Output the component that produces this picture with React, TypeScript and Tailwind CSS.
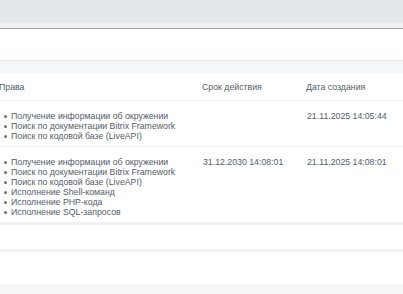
import React from "react";

const Bullets = ({ items }: { items: string[] }) => (
  <div className="flex flex-col">
    {items.map((t) => (
      <div key={t} className="flex items-center h-[10px]">
        <span className="ml-[4px] mr-[4px] w-[3px] h-[3px] rounded-full bg-[#6b727c] inline-block shrink-0" />
        <span>{t}</span>
      </div>
    ))}
  </div>
);

export default function App() {
  return (
    <div
      className="w-[403px] h-[294px] overflow-hidden bg-white text-[8.75px] leading-[10px] text-[#535c69] flex flex-col"
      style={{ fontFamily: '"Liberation Sans", Arial, sans-serif' }}
    >
      <div className="h-[23px] bg-[#e4e8eb] shrink-0" />
      <div className="h-[5px] bg-[#eef0f2] shrink-0" />
      <div className="h-[1px] bg-[#a4a8ac] shrink-0" />
      <div className="h-[31px] bg-white shrink-0" />
      <div className="h-[13px] bg-[#f5f6f7] border-t border-[#e3e6e8] shrink-0" />
      <div className="grid grid-cols-[202px_104px_1fr] pt-[9px] pb-[8px] shrink-0">
        <div className="-ml-[1px]">Права</div>
        <div>Срок действия</div>
        <div>Дата создания</div>
      </div>
      <div className="grid grid-cols-[202px_104px_1fr] border-t border-[#f0f1f2] pt-[10px] pb-[5px] shrink-0">
        <Bullets
          items={[
            "Получение информации об окружении",
            "Поиск по документации Bitrix Framework",
            "Поиск по кодовой базе (LiveAPI)",
          ]}
        />
        <div />
        <div className="h-[10px] pl-[1px]">21.11.2025 14:05:44</div>
      </div>
      <div className="grid grid-cols-[202px_104px_1fr] border-t border-[#f0f1f2] pt-[10px] pb-[5px] shrink-0">
        <Bullets
          items={[
            "Получение информации об окружении",
            "Поиск по документации Bitrix Framework",
            "Поиск по кодовой базе (LiveAPI)",
            "Исполнение Shell-команд",
            "Исполнение PHP-кода",
            "Исполнение SQL-запросов",
          ]}
        />
        <div className="h-[10px] pl-[1px]">31.12.2030 14:08:01</div>
        <div className="h-[10px] pl-[1px]">21.11.2025 14:08:01</div>
      </div>
      <div className="h-[3px] bg-[#f0f1f3] shrink-0" />
      <div className="h-[24px] bg-white shrink-0" />
      <div className="h-[3px] bg-[#f0f1f3] shrink-0" />
      <div className="h-[32px] bg-white shrink-0" />
      <div className="flex-1 bg-[#f5f6f7]" />
    </div>
  );
}
